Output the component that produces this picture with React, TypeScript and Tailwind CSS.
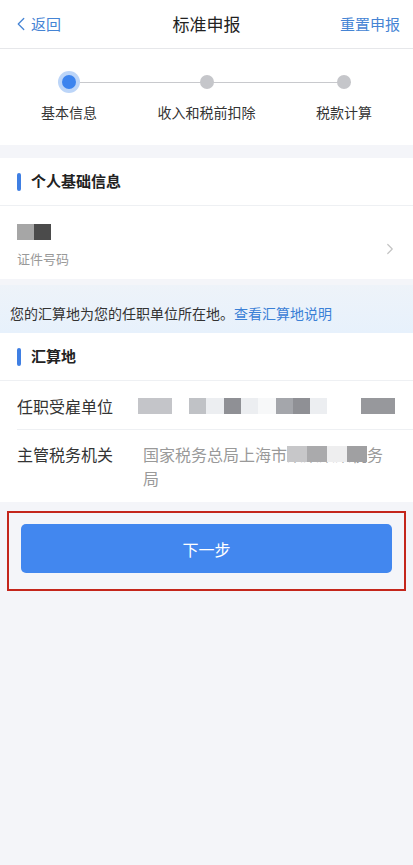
import { ChevronLeft, ChevronRight } from "lucide-react";

const steps = ["基本信息", "收入和税前扣除", "税款计算"];

function SectionTitle({ title }: { title: string }) {
  return (
    <div className="flex h-12 items-center gap-[10px] border-b border-[#eef0f3] bg-white pl-[17px]">
      <span className="h-[18px] w-[4px] rounded-full bg-[#3f7fe3]" />
      <span className="text-[15px] font-bold text-[#222]">{title}</span>
    </div>
  );
}

function Blur({ w, c }: { w: number; c: string }) {
  return <span className="inline-block h-[16px]" style={{ width: w, background: c }} />;
}

export default function App() {
  return (
    <div className="min-h-[865px] bg-[#f4f5f9] font-['Noto_Sans_CJK_SC',sans-serif]">
      {/* header */}
      <header className="relative flex h-[49px] items-center justify-between border-b border-[#e6e7ea] bg-white pl-[10px] pr-[13px]">
        <div className="flex items-center text-[15px] text-[#4584d4]">
          <ChevronLeft className="-mr-[1px] h-[26px] w-[22px]" strokeWidth={1.4} />
          <span>返回</span>
        </div>
        <h1 className="absolute left-1/2 -translate-x-1/2 text-[17px] text-[#222]">标准申报</h1>
        <span className="text-[15px] text-[#4584d4]">重置申报</span>
      </header>

      {/* steps */}
      <div className="bg-white pb-[22px] pt-[22px]">
        <div className="relative ml-[58px] mr-[62px] flex h-[22px] items-center justify-between">
          <div className="absolute left-0 right-0 top-1/2 h-px bg-[#c8c9cd]" />
          <span className="relative flex h-[22px] w-[22px] items-center justify-center rounded-full bg-[#bcd5f8]">
            <span className="h-[14px] w-[14px] rounded-full bg-[#3d84ee]" />
          </span>
          <span className="relative -ml-[4px] h-[14px] w-[14px] rounded-full bg-[#c5c6ca]" />
          <span className="relative h-[14px] w-[14px] rounded-full bg-[#c5c6ca]" />
        </div>
        <div className="mt-[9px] grid grid-cols-3 text-[14px] text-[#333]">
          <span className="pl-[41px]">{steps[0]}</span>
          <span className="text-center">{steps[1]}</span>
          <span className="pr-[41px] text-right">{steps[2]}</span>
        </div>
      </div>

      <div className="h-[13px]" />

      {/* personal info */}
      <SectionTitle title="个人基础信息" />
      <div className="flex h-[73px] items-start justify-between bg-white pl-[17px] pr-[14px] pt-[18px]">
        <div className="flex flex-col">
          <div className="flex">
            <span className="h-[16px] w-[17px] bg-[#a6a6a6]" />
            <span className="h-[16px] w-[17px] bg-[#4b4b4b]" />
          </div>
          <span className="mt-[10px] text-[13px] leading-[18px] text-[#999]">证件号码</span>
        </div>
        <ChevronRight className="mt-[16px] h-[18px] w-[18px] text-[#c4c4c4]" strokeWidth={1.6} />
      </div>

      <div className="h-[6px]" />

      {/* notice */}
      <div className="flex h-[48px] items-center bg-gradient-to-b from-[#eef3f9] to-[#e7f1fc] pl-[10px] pt-[8px] text-[14px] text-[#333]">
        您的汇算地为您的任职单位所在地。<span className="text-[#3a80d6]">查看汇算地说明</span>
      </div>

      {/* settlement place */}
      <SectionTitle title="汇算地" />
      <div className="bg-white">
        <div className="ml-[17px] flex h-[49px] items-center border-b border-[#eef0f3] pt-[2px] text-[16px] text-[#333]">
          <span className="w-[121px] shrink-0">任职受雇单位</span>
          <div className="flex items-center">
            <Blur w={34} c="#c4c5c9" />
            <span className="w-[17px]" />
            <Blur w={17} c="#c0c2c6" />
            <Blur w={18} c="#eceef1" />
            <Blur w={17} c="#8f9095" />
            <Blur w={17} c="#eceef1" />
            <Blur w={18} c="#f7f8f9" />
            <Blur w={17} c="#a4a6ab" />
            <Blur w={17} c="#8f9095" />
            <Blur w={17} c="#eceef1" />
            <span className="w-[34px]" />
            <Blur w={34} c="#97989c" />
          </div>
        </div>
        <div className="ml-[17px] flex pb-[12px] pt-[12px] text-[16px]">
          <span className="w-[126px] shrink-0 text-[#333]">主管税务机关</span>
          <div className="relative w-[248px] leading-[24px] text-[#999]">
            国家税务总局上海市某某某某税务局
            <div className="absolute left-[144px] top-[4px] flex">
              <Blur w={20} c="#c7c7c9" />
              <Blur w={20} c="#aaaaac" />
              <Blur w={20} c="#eeeeef" />
              <Blur w={20} c="#a0a0a2" />
            </div>
          </div>
        </div>
      </div>

      {/* next */}
      <div className="mx-[7px] mt-[9px] border-[2px] border-[#c4261c] px-[12px] pb-[16px] pt-[11px]">
        <button className="flex h-[49px] w-full items-center justify-center rounded-[5px] bg-[#4287ef] text-[16px] text-white">
          下一步
        </button>
      </div>
    </div>
  );
}
